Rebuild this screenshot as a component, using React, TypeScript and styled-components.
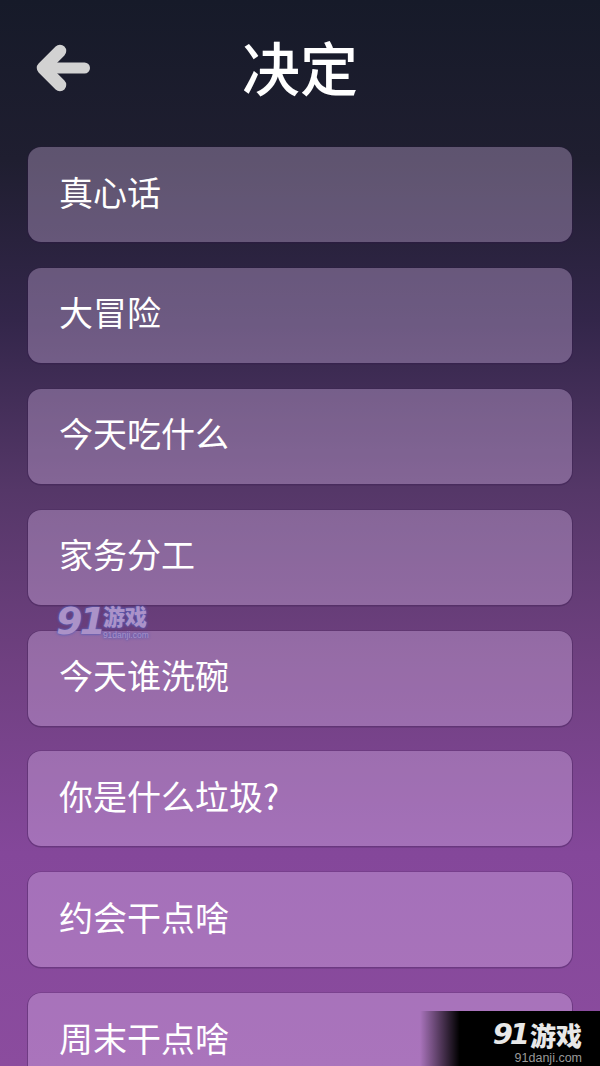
import {createGlobalStyle, styled} from "styled-components";

const decisions = ["真心话", "大冒险", "今天吃什么", "家务分工", "今天谁洗碗", "你是什么垃圾?", "约会干点啥", "周末干点啥"];

const cjk = `"Noto Sans CJK SC", "Noto Sans", sans-serif`;

const GlobalStyle = createGlobalStyle`
    html, body {
        margin: 0;
        padding: 0;
        height: 100%;
        overflow: hidden;
    }
`;

const Screen = styled.div`
    position: relative;
    width: 600px;
    height: 1066px;
    overflow: hidden;
    font-family: ${cjk};
    background: linear-gradient(180deg, #161a29 0%, #1f1e30 15%, #33264a 30%, #553768 46%, #6f4080 62%, #84479a 80%, #8b4c9e 100%);
`;

const Header = styled.header`
    height: 147px;
    box-sizing: border-box;
    position: relative;
    display: flex;
    justify-content: center;
    padding-top: 28px;
`;

const BackButton = styled.button`
    position: absolute;
    left: 36px;
    top: 44px;
    width: 56px;
    height: 48px;
    padding: 0;
    border: 0;
    background: none;
`;

const Title = styled.h1`
    margin: 0;
    color: #fff;
    font-size: 58px;
    font-weight: 500;
    line-height: 76px;
`;

const List = styled.div`
    display: flex;
    flex-direction: column;
    gap: 25.9px;
    padding: 0 28px;
`;

const Card = styled.div`
    flex-shrink: 0;
    height: 95px;
    box-sizing: border-box;
    padding-left: 31px;
    padding-bottom: 7px;
    display: flex;
    align-items: center;
    border-radius: 13px;
    background: rgba(238, 208, 255, 0.31);
    box-shadow: 0 0.5px 0 1px rgba(45, 20, 70, 0.3);
    color: #fff;
    font-size: 34px;
    font-weight: 400;
`;

const FaintMark = styled.div`
    position: absolute;
    left: 56px;
    top: 601px;
    display: flex;
    align-items: flex-start;
    color: #ab92c8;
    text-shadow: 0 0 3px #5a5fb8, 0 0 2px #5a5fb8;
`;

const CornerMark = styled.div`
    position: absolute;
    right: 0;
    bottom: 0;
    width: 180px;
    height: 55px;
    box-sizing: border-box;
    padding: 8px 18px 0 0;
    display: flex;
    flex-direction: column;
    align-items: flex-end;
    gap: 1px;
    color: #e8e8e8;
    background: linear-gradient(90deg, rgba(0, 0, 0, 0) 0%, #000 22%);
`;

const CornerRow = styled.div`
    display: flex;
    align-items: center;
    gap: 3px;
`;

const MarkLogo = styled.span<{$size: number}>`
    font-family: "DejaVu Sans", sans-serif;
    font-style: italic;
    font-weight: 700;
    font-size: ${p => p.$size}px;
    line-height: 1.1;
    letter-spacing: -3px;
`;

const MarkText = styled.div`
    display: flex;
    flex-direction: column;
    align-items: flex-start;
    gap: 5px;
    padding-top: 3px;
`;

const MarkName = styled.span<{$size: number}>`
    font-weight: 900;
    font-size: ${p => p.$size}px;
    line-height: 1;
`;

const MarkUrl = styled.span<{$size: number}>`
    font-family: "Liberation Sans", sans-serif;
    font-size: ${p => p.$size}px;
    line-height: 1;
`;

const CornerUrl = styled(MarkUrl)`
    color: #999;
`;

const BackArrow = () => (
    <svg width="56" height="48" viewBox="0 0 56 48">
        <path
            d="M24 7 L7 24 L24 41"
            fill="none"
            stroke="#d2d2d2"
            strokeWidth="12.5"
            strokeLinecap="round"
            strokeLinejoin="round"
        />
        <path d="M9 24 H48.5" stroke="#d2d2d2" strokeWidth="11" strokeLinecap="round"/>
    </svg>
);

export default function App() {
    return (
        <Screen>
            <GlobalStyle/>
            <Header>
                <BackButton aria-label="返回"><BackArrow/></BackButton>
                <Title>决定</Title>
            </Header>
            <List>
                {decisions.map(name => <Card key={name}>{name}</Card>)}
            </List>
            <FaintMark>
                <MarkLogo $size={38}>91</MarkLogo>
                <MarkText>
                    <MarkName $size={22}>游戏</MarkName>
                    <MarkUrl $size={8.5}>91danji.com</MarkUrl>
                </MarkText>
            </FaintMark>
            <CornerMark>
                <CornerRow>
                    <MarkLogo $size={29}>91</MarkLogo>
                    <MarkName $size={26}>游戏</MarkName>
                </CornerRow>
                <CornerUrl $size={12.5}>91danji.com</CornerUrl>
            </CornerMark>
        </Screen>
    );
}
